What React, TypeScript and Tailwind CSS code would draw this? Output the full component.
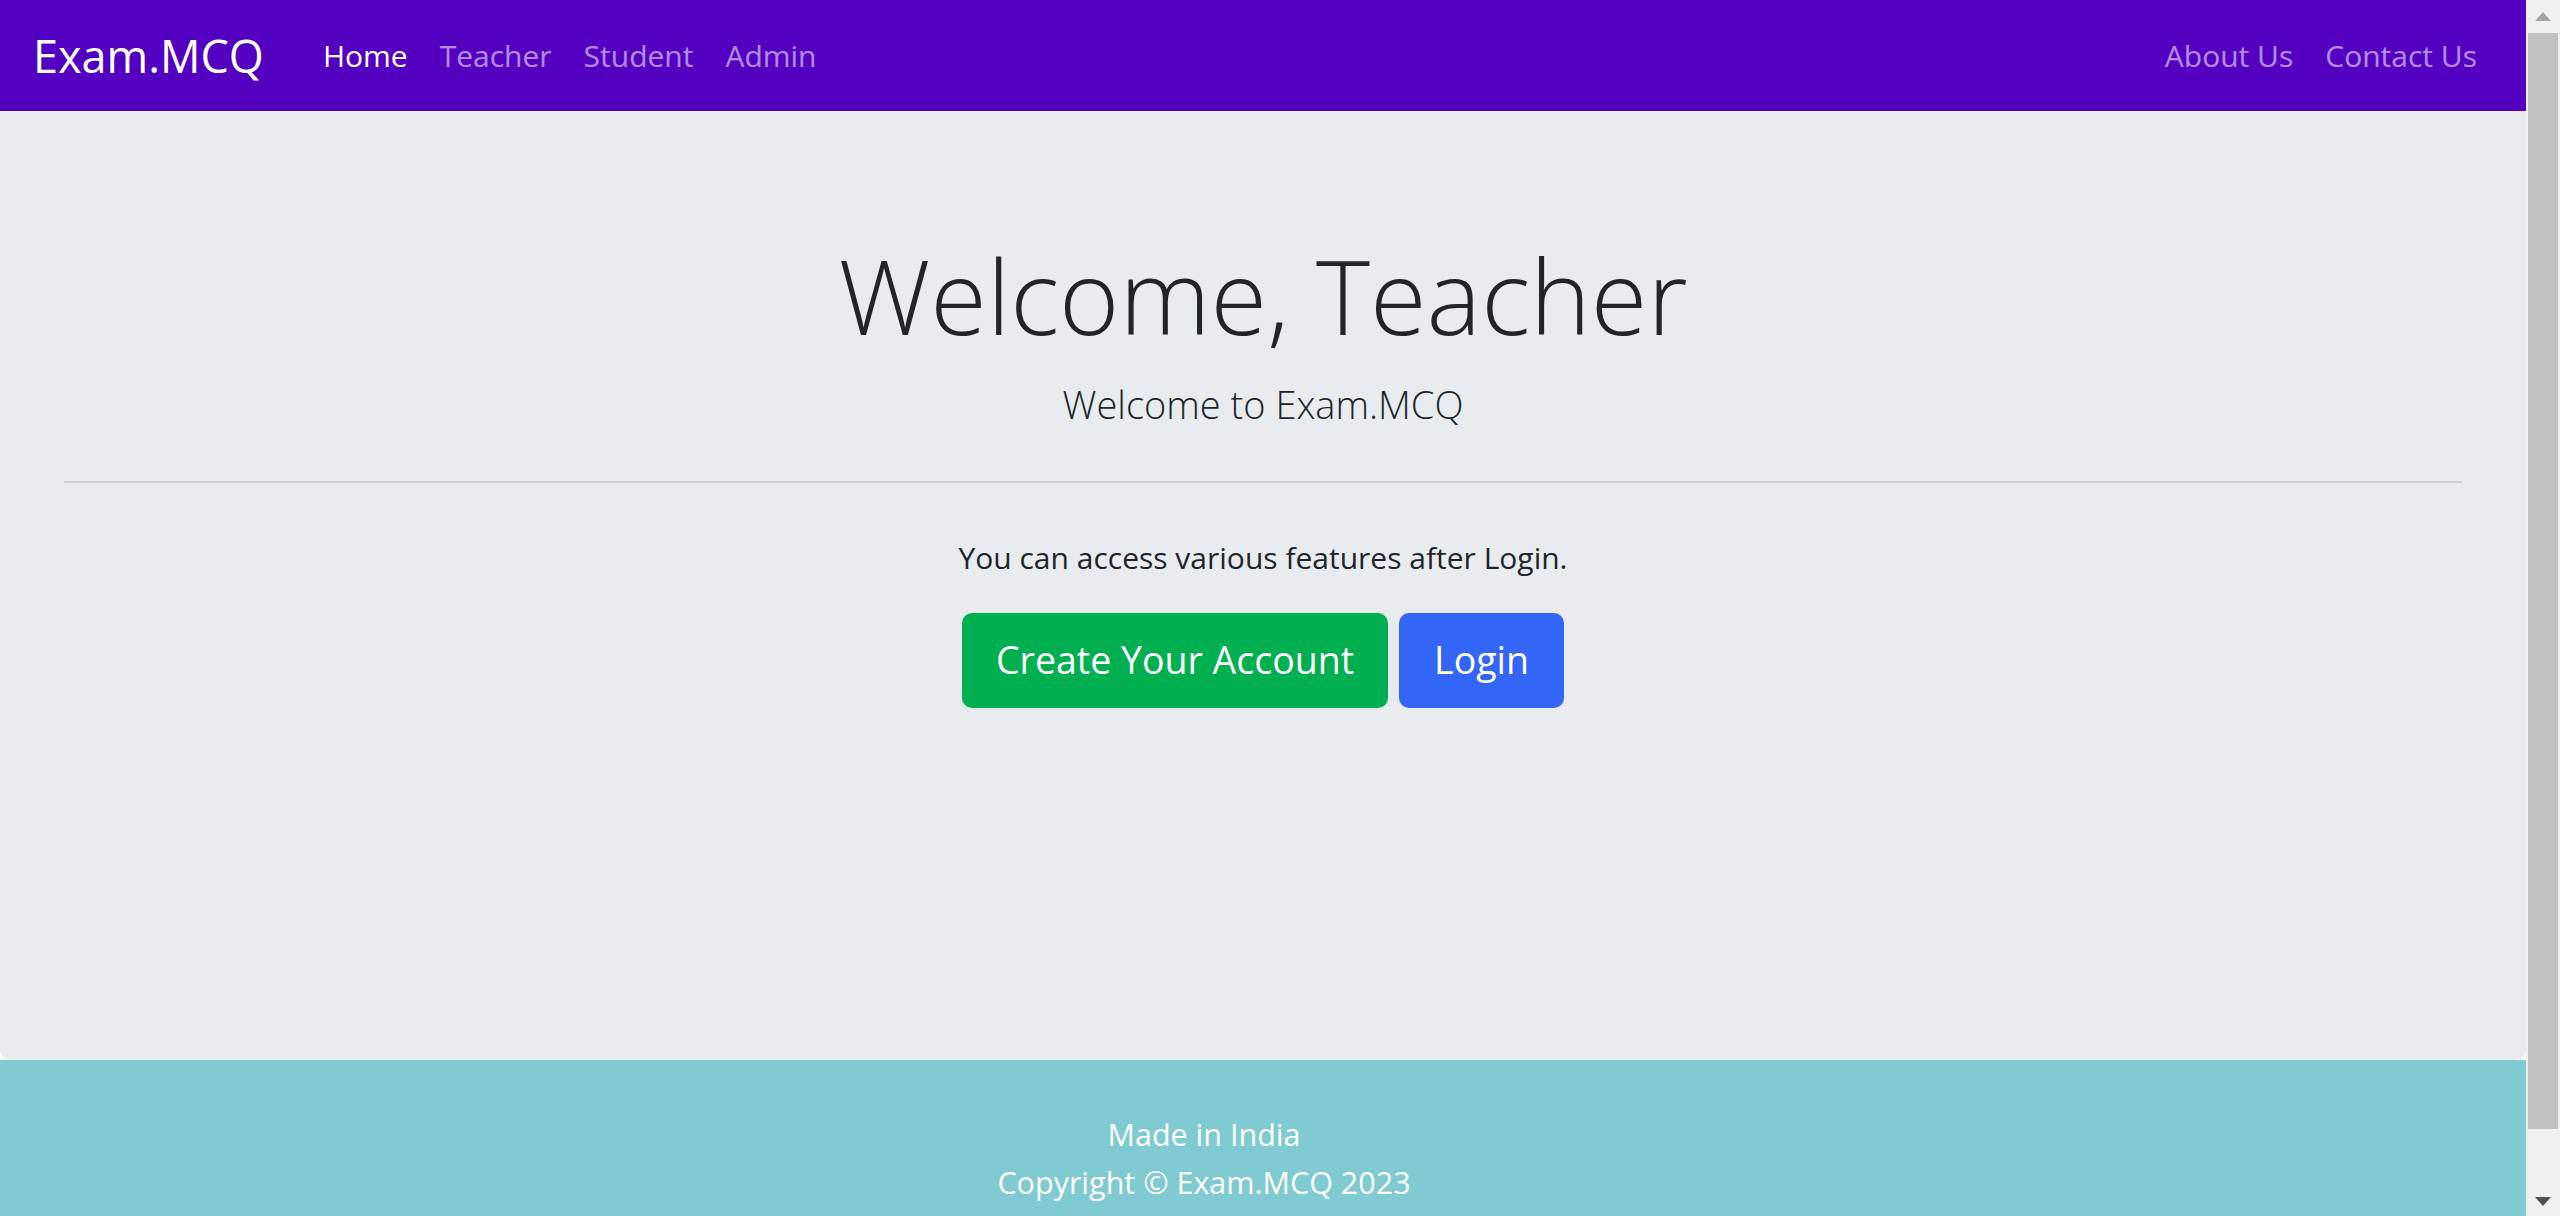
const font = { fontFamily: '"Open Sans", "Noto Sans", Arial, sans-serif' };

function NavLink({ label, active }: { label: string; active?: boolean }) {
  return (
    <a
      href="#"
      className={
        active
          ? 'px-[16px] text-[30px] leading-[48px] text-white'
          : 'px-[16px] text-[30px] leading-[48px] text-white/55'
      }
    >
      {label}
    </a>
  );
}

function Scrollbar() {
  return (
    <div className="flex w-[34px] shrink-0 flex-col items-center bg-[#f0f0f0]">
      <div className="flex h-[33px] w-full items-center justify-center">
        <svg width="16" height="9" viewBox="0 0 16 9">
          <polygon points="8,0 16,9 0,9" fill="#a3a3a3" />
        </svg>
      </div>
      <div className="h-[1096px] w-[30px] bg-[#c1c1c1]" />
      <div className="flex flex-1 items-end justify-center pb-[10px]">
        <svg width="16" height="9" viewBox="0 0 16 9">
          <polygon points="0,0 16,0 8,9" fill="#505050" />
        </svg>
      </div>
    </div>
  );
}

export default function App() {
  return (
    <div className="flex h-[1216px] w-full overflow-hidden bg-white text-[#212529]" style={font}>
      <div className="flex min-w-0 flex-1 flex-col">
        <nav className="flex h-[111px] shrink-0 items-center bg-[#5400c0] px-[33px]">
          <a href="#" className="text-[45px] leading-[60px] text-white">Exam.MCQ</a>
          <div className="ml-[43px] flex items-center">
            <NavLink label="Home" active />
            <NavLink label="Teacher" />
            <NavLink label="Student" />
            <NavLink label="Admin" />
          </div>
          <div className="ml-auto flex items-center">
            <NavLink label="About Us" />
            <NavLink label="Contact Us" />
          </div>
        </nav>

        <main className="flex h-[949px] shrink-0 flex-col items-center rounded-b-[10px] bg-[#e9ecef] px-[64px] pt-[117px]">
          <h1 className="text-[103px] font-light leading-[134px]">Welcome, Teacher</h1>
          <p className="mt-[12px] text-[38px] font-light leading-[60px]">Welcome to Exam.MCQ</p>
          <hr className="mt-[47px] w-full border-t-2 border-[#ced2d6]" />
          <p className="mt-[51px] text-[30px] leading-[48px]">You can access various features after Login.</p>
          <div className="mt-[31px] flex gap-[11px]">
            <a href="#" className="flex h-[95px] items-center rounded-[10px] bg-[#00b050] px-[34px] text-[37.5px] text-white">
              Create Your Account
            </a>
            <a href="#" className="flex h-[95px] items-center rounded-[10px] bg-[#3366f6] px-[35px] text-[37.5px] text-white">
              Login
            </a>
          </div>
        </main>

        <footer className="flex flex-1 flex-col items-center bg-[#80cbd1] pr-[118px] pt-[50px] text-[30.5px] leading-[48px] text-white">
          <p>Made in India</p>
          <p>Copyright © Exam.MCQ 2023</p>
        </footer>
      </div>
      <Scrollbar />
    </div>
  );
}
